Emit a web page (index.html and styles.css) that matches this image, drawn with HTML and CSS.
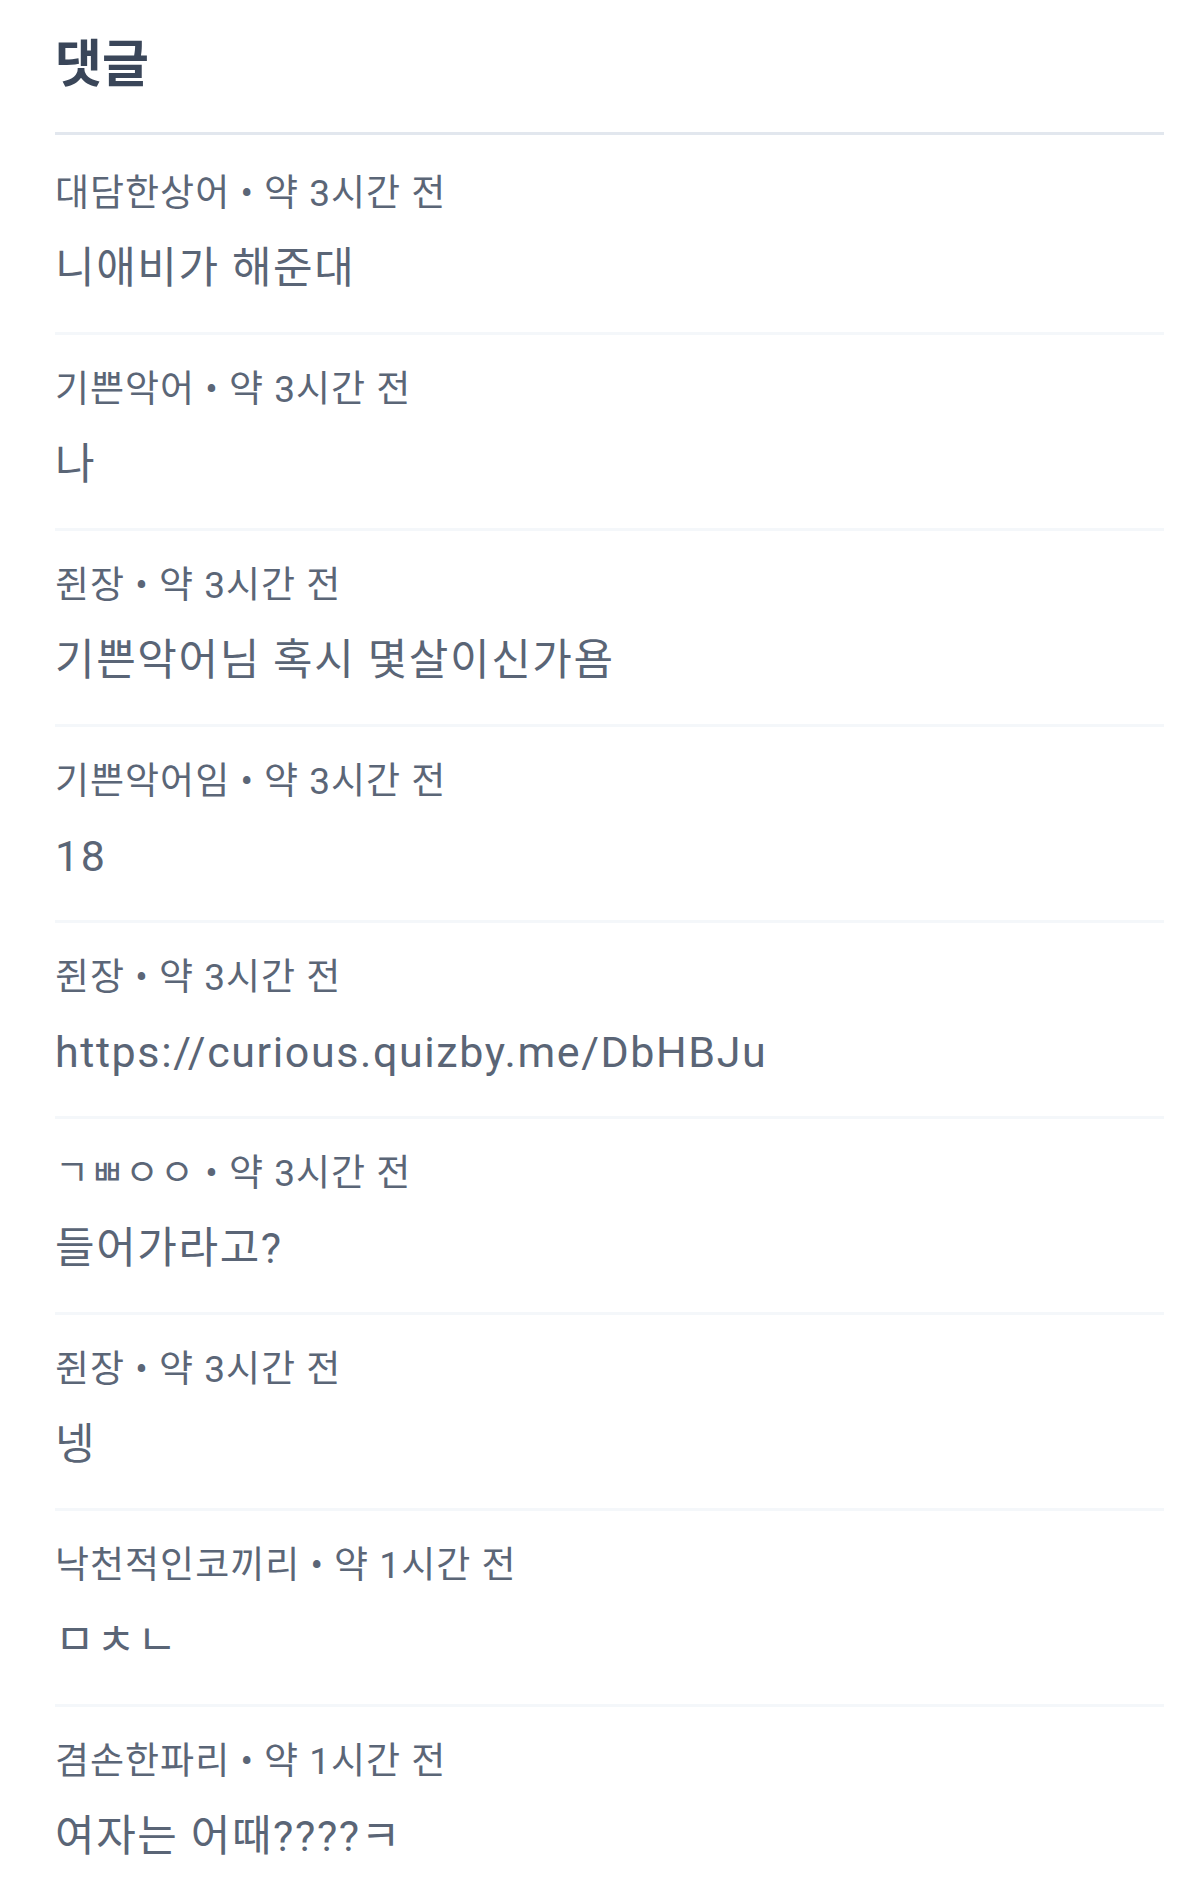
FILE: index.html
```html
<!DOCTYPE html>
<html lang="ko">
<head>
<meta charset="utf-8">
<title>댓글</title>
<link rel="stylesheet" href="styles.css">
</head>
<body>
<section class="comments">
  <h2 class="title">댓글</h2>
  <ul class="list">
    <li class="item"><div class="meta">대담한상어 • 약 3시간 전</div><div class="body">니애비가 해준대</div></li>
    <li class="item"><div class="meta">기쁜악어 • 약 3시간 전</div><div class="body">나</div></li>
    <li class="item"><div class="meta">쥔장 • 약 3시간 전</div><div class="body">기쁜악어님 혹시 몇살이신가욤</div></li>
    <li class="item"><div class="meta">기쁜악어임 • 약 3시간 전</div><div class="body">18</div></li>
    <li class="item"><div class="meta">쥔장 • 약 3시간 전</div><div class="body">https://curious.quizby.me/DbHBJu</div></li>
    <li class="item"><div class="meta">ㄱㅃㅇㅇ • 약 3시간 전</div><div class="body">들어가라고?</div></li>
    <li class="item"><div class="meta">쥔장 • 약 3시간 전</div><div class="body">넹</div></li>
    <li class="item"><div class="meta">낙천적인코끼리 • 약 1시간 전</div><div class="body">ㅁㅊㄴ</div></li>
    <li class="item"><div class="meta">겸손한파리 • 약 1시간 전</div><div class="body">여자는 어때????ㅋ</div></li>
  </ul>
</section>
</body>
</html>
```
FILE: styles.css
```css
html, body {
  margin: 0;
  padding: 0;
  background: #ffffff;
}
body {
  font-family: Roboto, "Noto Sans CJK KR", sans-serif;
  width: 1200px;
  height: 1891px;
  overflow: hidden;
}
.comments {
  margin: 0 36px 0 55px;
  padding-top: 35px;
}
.title {
  margin: 0;
  font-size: 51px;
  line-height: 60px;
  font-weight: 700;
  color: #3a4659;
  padding-bottom: 37px;
  border-bottom: 3px solid #e2e7ee;
}
.list {
  list-style: none;
  margin: 4px 0 0;
  padding: 0;
}
.item {
  padding: 29px 0 34px;
  border-bottom: 3px solid #f4f7fa;
}
.meta {
  font-size: 37px;
  line-height: 52px;
  letter-spacing: 1px;
  color: #5b6677;
  margin-bottom: 18px;
}
.body {
  font-size: 43px;
  line-height: 60px;
  letter-spacing: 1.6px;
  color: #5a6576;
}
```
